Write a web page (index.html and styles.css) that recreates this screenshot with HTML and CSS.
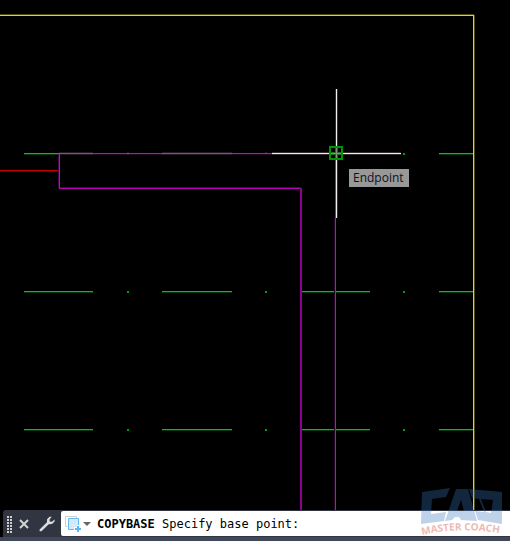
FILE: index.html
```html
<!DOCTYPE html>
<html lang="en">
<head>
<meta charset="utf-8">
<title>Drawing</title>
<link rel="stylesheet" href="styles.css">
</head>
<body>
<main class="workspace">
  <section class="canvas" aria-label="Drawing area">
    <svg class="drawing" aria-hidden="true" shape-rendering="crispEdges">
      <path fill="#003c05" d="M24 154h35v1h-35zM439 154h34v1h-34zM24 292h69v1h-69zM162 292h70v1h-70zM301 292h69v1h-69zM439 292h34v1h-34zM24 430h69v1h-69zM162 430h70v1h-70zM301 430h69v1h-69zM439 430h34v1h-34z"/>
      <g fill="#00c410">
        <path d="M24 153h35v1h-35zM439 153h34v1h-34z"/>
        <path d="M24 291h69v1h-69zM162 291h70v1h-70zM301 291h69v1h-69zM439 291h34v1h-34z"/>
        <path d="M24 429h69v1h-69zM162 429h70v1h-70zM301 429h69v1h-69zM439 429h34v1h-34z"/>
      </g>
      <path fill="#009c0c" d="M403 153h2v2h-2zM127 291h2v2h-2zM265 291h2v2h-2zM403 291h2v2h-2zM127 429h2v2h-2zM265 429h2v2h-2zM403 429h2v2h-2z"/>
      <path fill="#c80000" d="M0 170h59v1h-59z"/>
      <path fill="#500000" d="M0 171h59v1h-59z"/>
      <path fill="#241824" d="M59 152h34v3h-34zM162 152h70v3h-70zM127 152h2v3h-2zM265 152h2v3h-2z"/>
      <path fill="#280028" d="M93 154h34v1h-34zM129 154h33v1h-33zM232 154h40v1h-40z"/>
      <path fill="#500050" d="M58 154h1v34h-1z"/>
      <path fill="#d000d0" d="M59 153h213v1h-213zM59 153h1v35h-1zM335 154h1v400h-1z"/>
      <path fill="#280028" d="M334 218h1v400h-1z"/>
      <path fill="#b800b8" d="M59 188h242v1h-242z"/>
      <path fill="#580058" d="M60 187h241v1h-241z"/>
      <path fill="#900090" d="M300 188h2v400h-2z"/>
      <path fill="#b030b0" d="M59 153h34v1h-34zM162 153h70v1h-70z"/>
      <path fill="#785078" d="M127 153h2v1h-2zM265 153h2v1h-2z"/>
      <path fill="#d8d820" d="M0 15h474v1h-474zM473 15h1v600h-1z"/>
      <path fill="#504c0c" d="M0 14h474v1h-474zM474 15h1v600h-1z"/>
      <path fill="#302c30" d="M335 89h3v65h-3zM337 154h1v64h-1zM272 152h129v3h-129z"/>
      <path fill="#f4eef0" d="M336 89h1v129h-1zM272 153h129v1h-129z"/>
      <path fill="none" stroke="#009400" stroke-width="2" d="M330 147h12v12h-12z"/>
      <path fill="#206b20" d="M331 152h10v3h-10zM335 148h3v10h-3z"/>
      <path fill="#849084" d="M331 153h10v1h-10zM336 148h1v10h-1z"/>
    </svg>
    <output class="tooltip">Endpoint</output>
  </section>
  <form class="command-bar">
    <span class="grip"></span>
    <button class="tool" type="button" aria-label="Close">
      <svg width="12" height="12" viewBox="0 0 12 12"><path d="M2 2l8 8M10 2l-8 8" stroke="#d4d4d4" stroke-width="2"/></svg>
    </button>
    <button class="tool tool-wrench" type="button" aria-label="Customize">
      <svg width="16" height="16" viewBox="0 0 16 16"><path fill="#dcdcdc" d="M10.5 .7L8 3.2v3L.6 13.4v1.9h1.9l7.2-7.1 3.3-.1 2.6-2.7V3.6l-2.7 2.1-2.2-.1-.1-2L12.7.7z"/></svg>
    </button>
    <div class="prompt">
      <button class="recent" type="button" aria-label="Recent commands">
        <svg width="26" height="18" viewBox="0 0 26 18">
          <path d="M.5 11.5V1.5h11" fill="none" stroke="#cfcfcf"/>
          <path d="M.5 11.5h2M11.5 1.5v2" stroke="#cfcfcf"/>
          <path d="M3.5 3.5h10v11h-10z" fill="#d4eafc" stroke="#66b8f0"/>
          <path d="M9 12h3v-2h3v2h2v6H9z" fill="#fff"/>
          <path d="M13 11v6M10 14h6" stroke="#5bb8f8" stroke-width="2"/>
          <path d="M18 7h8l-4 4z" fill="#666"/>
        </svg>
      </button>
      <label class="message" for="command"><b>COPYBASE</b> Specify base point:</label>
      <input class="command" id="command" type="text" autocomplete="off">
    </div>
  </form>
  <div class="status-edge"></div>
  <svg class="brand" width="82" height="46" viewBox="0 0 82 46" role="img" aria-label="Master Coach">
    <g fill="#3878c0" opacity="0.32">
      <path d="M1 4L29 0l-4 9-14 2-1 15 15-2-2 9L0 36z"/>
      <path fill-rule="evenodd" d="M35 1h12l9 32-16-1-2-3h-4l-3 3-7 1zM40 12l-4 11h7z"/>
      <path fill-rule="evenodd" d="M48 1l33 3v32l-24-4-3-9 9 1-5-13-7-1zM60 11l12 1-2 13-5-1z"/>
    </g>
    <path id="arc" d="M1 47Q41 38 82 46" fill="none"/>
    <text class="brand-name"><textPath href="#arc">MASTER COACH</textPath></text>
  </svg>
</main>
</body>
</html>
```
FILE: styles.css
```css
* {
  box-sizing: border-box;
}

body {
  margin: 0;
  background: #000;
  font-family: "Noto Sans", "Open Sans", sans-serif;
  font-size: 12px;
}

.workspace {
  position: relative;
  display: flex;
  flex-direction: column;
  min-height: 100vh;
  overflow: hidden;
}

.canvas {
  position: relative;
  flex: 1;
  overflow: hidden;
}

.drawing {
  position: absolute;
  inset: 0;
  width: 100%;
  height: 100%;
}

.tooltip {
  position: absolute;
  left: 349px;
  top: 169px;
  padding: 0 4px;
  width: 60px;
  line-height: 18px;
  color: #101018;
  background: #989898;
  font-family: "Open Sans", sans-serif;
}

.command-bar {
  display: flex;
  align-items: center;
  height: 27px;
  margin-left: 3px;
  padding: 1px 0;
  background: #303541;
  border-top-left-radius: 3px;
}

.grip {
  width: 6px;
  height: 18px;
  margin: 0 3px 0 4px;
  background-image: linear-gradient(#303541 1px, transparent 1px), linear-gradient(90deg, #d0d0d0 2px, transparent 2px);
  background-size: 3px 3px;
}

.tool {
  display: flex;
  margin-left: 2px;
  padding: 0;
  border: 0;
  background: none;
}

.tool-wrench {
  margin-left: 9px;
}

.prompt {
  display: flex;
  flex: 1;
  align-items: center;
  align-self: stretch;
  margin-left: 6px;
  padding-left: 4px;
  background: #fff;
  border-radius: 2px 0 0 2px;
}

.recent {
  display: flex;
  padding: 0;
  border: 0;
  background: none;
}

.message,
.command {
  font: 12px/16px "DejaVu Sans Mono", monospace;
}

.message {
  margin-left: 6px;
  color: #000;
  white-space: nowrap;
}

.command {
  flex: 1;
  min-width: 0;
  padding: 0;
  border: 0;
  outline: 0;
  background: none;
}

.status-edge {
  height: 4px;
  background: #3f4859;
}

.brand {
  position: absolute;
  right: 7px;
  bottom: 7px;
  overflow: visible;
  pointer-events: none;
}

.brand-name {
  fill: #edbab3;
  font: bold 10px "Open Sans", sans-serif;
}
```
